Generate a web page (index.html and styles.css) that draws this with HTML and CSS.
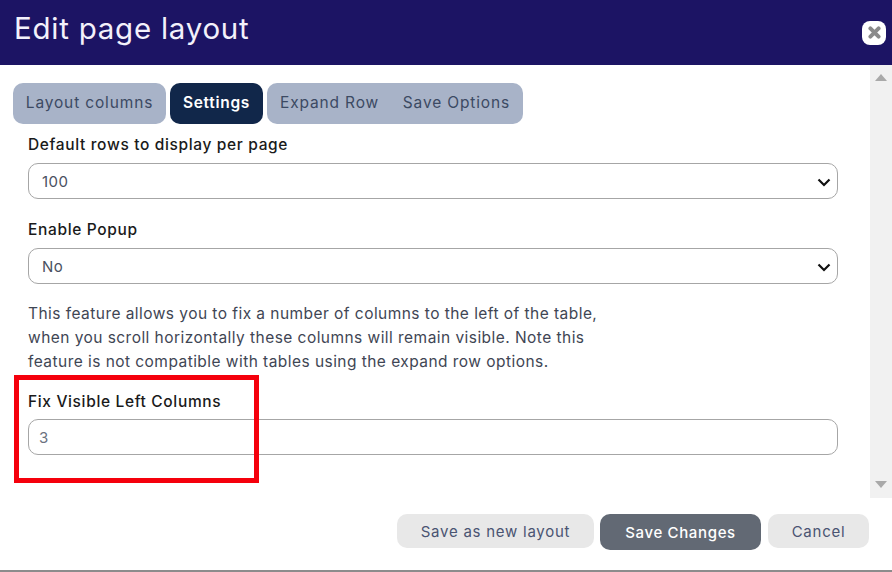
FILE: index.html
```html
<!DOCTYPE html>
<html lang="en">
<head>
<meta charset="utf-8">
<title>Edit page layout</title>
<link rel="stylesheet" href="styles.css">
</head>
<body>
<div class="modal">
  <header class="head">
    <h1 class="title">Edit page layout</h1>
    <button class="close" aria-label="Close">
      <svg width="13" height="13" viewBox="0 0 12 12"><path d="M2.2 2.2l7.6 7.6M9.8 2.2l-7.6 7.6" stroke="#8a8a8a" stroke-width="3.6" stroke-linecap="round"/></svg>
    </button>
  </header>
  <div class="main">
    <div class="content">
      <nav class="tabs">
        <span class="tab">Layout columns</span>
        <span class="tab active">Settings</span>
        <span class="tab-group"><span class="tab-in">Expand Row</span><span class="tab-in">Save Options</span></span>
      </nav>
      <form class="form">
        <div class="field first">
          <label class="label">Default rows to display per page</label>
          <div class="select-wrap">
            <select class="control"><option>100</option></select>
            <svg class="chev" width="14" height="9" viewBox="0 0 14 9"><path d="M1.5 1.5L7 7l5.5-5.5" fill="none" stroke="#111" stroke-width="2.2"/></svg>
          </div>
        </div>
        <div class="field second">
          <label class="label">Enable Popup</label>
          <div class="select-wrap">
            <select class="control"><option>No</option></select>
            <svg class="chev" width="14" height="9" viewBox="0 0 14 9"><path d="M1.5 1.5L7 7l5.5-5.5" fill="none" stroke="#111" stroke-width="2.2"/></svg>
          </div>
        </div>
        <p class="note">This feature allows you to fix a number of columns to the left of the table,<br>when you scroll horizontally these columns will remain visible. Note this<br>feature is not compatible with tables using the expand row options.</p>
        <div class="field third">
          <label class="label">Fix Visible Left Columns</label>
          <input class="control number" value="3">
        </div>
      </form>
      <div class="highlight"></div>
    </div>
    <div class="scrollbar">
      <svg width="12" height="7" viewBox="0 0 12 7"><path d="M0 7L6 0l6 7z" fill="#a9a9a9"/></svg>
      <svg width="12" height="7" viewBox="0 0 12 7"><path d="M0 0l6 7 6-7z" fill="#a9a9a9"/></svg>
    </div>
  </div>
  <footer class="foot">
    <button class="btn save-new">Save as new layout</button>
    <button class="btn primary">Save Changes</button>
    <button class="btn cancel">Cancel</button>
  </footer>
</div>
</body>
</html>
```
FILE: styles.css
```css
* { box-sizing: border-box; }
html, body { margin: 0; height: 100%; background: #fff; overflow: hidden; }
body { font-family: "Inter", "Open Sans", sans-serif; color: #212529; }
.modal { position: relative; height: 572px; display: flex; flex-direction: column; border-bottom: 2px solid #8c8c8c; }
.head { height: 65px; flex: none; background: #1c1464; display: flex; align-items: center; justify-content: space-between; padding: 0 6px 9px 14px; }
.title { margin: 0; font-size: 29.5px; font-weight: 400; color: #f3f1fb; letter-spacing: 0.75px; white-space: nowrap; }
.close { width: 24px; height: 24px; margin-top: 9px; padding: 0; border: 0; border-radius: 8px; background: #fff; display: flex; align-items: center; justify-content: center; }
.main { height: 433px; flex: none; display: flex; }
.content { position: relative; flex: 1; min-width: 0; padding: 18px 0 0 13px; }
.scrollbar { width: 22px; flex: none; background: #f1f1f1; display: flex; flex-direction: column; justify-content: space-between; align-items: center; padding: 9px 0 10px; }
.tabs { display: flex; gap: 4px; height: 41px; }
.tab, .tab-group { background: #a8b3c8; border-radius: 10px; color: #3c4a63; font-size: 15.5px; letter-spacing: 0.85px; display: flex; align-items: center; padding-bottom: 3px; }
.tab { width: 153px; justify-content: center; white-space: nowrap; }
.tab.active { width: 93px; background: #11274a; color: #fff; font-weight: 600; letter-spacing: 0.7px; }
.tab-group { width: 256px; padding-left: 13px; padding-right: 13px; justify-content: space-between; }
.tab-in { white-space: nowrap; }
.form { padding: 0 32px 0 15px; }
.label { display: block; font-size: 15.5px; font-weight: 500; color: #1a1a1a; line-height: 20px; letter-spacing: 0.65px; white-space: nowrap; }
.field.first { margin-top: 11px; }
.field.second { margin-top: 21px; }
.field.third { margin-top: 18px; }
.control { display: block; width: 100%; height: 36px; margin-top: 8px; padding: 0 13px; border: 1px solid #a6a6a6; border-radius: 10px; background: #fff; font: 400 15px "Inter", "Open Sans", sans-serif; letter-spacing: 0.5px; color: #4a5160; appearance: none; outline: 0; }
.number { margin-top: 7px; padding-left: 10px; color: #6b7280; }
.select-wrap { position: relative; }
.chev { position: absolute; right: 7px; top: 15px; }
.note { margin: 18px 0 0; font-size: 15.5px; line-height: 24px; letter-spacing: 0.45px; color: #3f4654; white-space: nowrap; }
.highlight { position: absolute; left: 14px; top: 310px; width: 245px; height: 108px; border: 5px solid #f5000c; pointer-events: none; }
.foot { flex: 1; display: flex; justify-content: flex-end; align-items: flex-start; gap: 6px; padding: 16px 23px 0 0; }
.btn { height: 34px; padding: 0; border: 0; border-radius: 10px; background: #e8e8e8; color: #4a5472; font: 400 15px "Inter", "Open Sans", sans-serif; letter-spacing: 0.75px; white-space: nowrap; }
.save-new { width: 197px; }
.primary { width: 161px; height: 36px; background: #626974; color: #fff; font-weight: 500; letter-spacing: 0.65px; }
.cancel { width: 101px; margin-left: 1px; }
```
